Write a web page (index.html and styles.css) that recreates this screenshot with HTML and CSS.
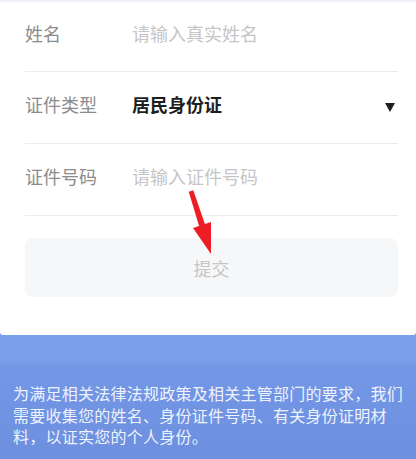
FILE: index.html
```html
<!DOCTYPE html>
<html lang="zh-CN">

<head>
    <meta charset="UTF-8">
    <title>实名认证</title>

    <link rel="stylesheet" href="styles.css">

</head>

<body>

    <section class="kort">
        <form class="formular">
            <label class="raekke">
                <span class="etiket">姓名</span>
                <input class="felt" type="text" placeholder="请输入真实姓名">
            </label>
            <div class="raekke">
                <span class="etiket">证件类型</span>
                <span class="valgt">居民身份证</span>
                <span class="pil-ned"></span>
            </div>
            <label class="raekke">
                <span class="etiket">证件号码</span>
                <input class="felt" type="text" placeholder="请输入证件号码">
            </label>
            <button class="indsend" type="button">提交</button>
        </form>

        <svg class="markering" width="416" height="300" viewBox="0 0 416 300">
            <polygon points="188.7,191.7 193.3,190.3 204.9,224.1 211,222 211,254 193,228 199.1,225.9" fill="#ee1d25" />
        </svg>
    </section>

    <section class="info">
        <p>为满足相关法律法规政策及相关主管部门的要求，我们需要收集您的姓名、身份证件号码、有关身份证明材料，以证实您的个人身份。</p>
    </section>

</body>

</html>
```

FILE: styles.css
```css
* {
    box-sizing: border-box;
}

body {
    margin: 0;
    font-family: "Noto Sans CJK SC", "Noto Sans", sans-serif;
    background: #6f92e0;
}

.kort {
    position: relative;
    background: #fff;
    border-top: 2px solid #eef1f7;
    border-radius: 0 0 3px 3px;
    padding: 0 18px 38px 25px;
}

.formular {
    display: flex;
    flex-direction: column;
}

.raekke {
    display: flex;
    align-items: center;
    height: 72px;
    padding-bottom: 7px;
    border-bottom: 1px solid #ececec;
    font-size: 18px;
}

.raekke:first-child {
    height: 70px;
}

.etiket {
    width: 107px;
    flex-shrink: 0;
    color: #8c8c8c;
}

.felt {
    flex: 1;
    border: none;
    outline: none;
    padding: 0;
    font: inherit;
    color: #222;
    background: transparent;
}

.felt::placeholder {
    color: #c6c6c6;
}

.valgt {
    flex: 1;
    font-weight: bold;
    color: #1e1e1e;
}

.pil-ned {
    width: 0;
    height: 0;
    margin: 7px 3px 0 0;
    border-left: 5px solid transparent;
    border-right: 5px solid transparent;
    border-top: 9px solid #1e1e1e;
}

.indsend {
    margin-top: 22px;
    height: 59px;
    border: none;
    border-radius: 8px;
    background: #f6f7f9;
    color: #c6c6c6;
    font: inherit;
    font-size: 18px;
}

.markering {
    position: absolute;
    top: -2px;
    left: 0;
    pointer-events: none;
}

.info {
    background: linear-gradient(#7ba0ea 0, #7ba0ea 27px, #7398e6 30px, #6d8fdf 100%);
    padding: 48px 12px 8px 13px;
}

.info p {
    margin: 0;
    color: #eef2fd;
    font-size: 16px;
    letter-spacing: 0.25px;
    line-height: 21.5px;
}
```
